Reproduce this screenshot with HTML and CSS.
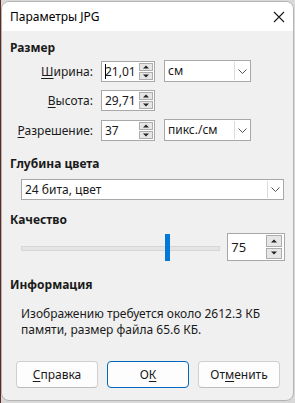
FILE: index.html
```html
<!DOCTYPE html>
<html lang="ru">
<head>
  <meta charset="UTF-8">
  <title>Параметры JPG</title>
  <link rel="stylesheet" href="styles.css">
</head>
<body>
  <div class="window">
    <div class="titlebar">
      <span class="title">Параметры JPG</span>
      <svg class="close" width="12" height="12" viewBox="0 0 12 12">
        <path d="M1 1 L11 11 M11 1 L1 11" stroke="#1a1a1a" stroke-width="1.1" fill="none"/>
      </svg>
    </div>

    <div class="content">
      <h3 class="group-title">Размер</h3>
      <div class="size-grid">
        <label class="lbl"><u>Ш</u>ирина:</label>
        <div class="spin">
          <span class="spin-value"><span class="caret"></span>21,01</span>
          <span class="spin-btns"><span class="up"></span><span class="down"></span></span>
        </div>
        <div class="combo small">
          <span>см</span>
          <span class="arrow"><svg width="9" height="5" viewBox="0 0 9 5"><path d="M0.5 0.5 L4.5 4.5 L8.5 0.5" stroke="#555" fill="none"/></svg></span>
        </div>

        <label class="lbl"><u>В</u>ысота:</label>
        <div class="spin">
          <span class="spin-value">29,71</span>
          <span class="spin-btns"><span class="up"></span><span class="down"></span></span>
        </div>
        <div></div>

        <label class="lbl"><u>Р</u>азрешение:</label>
        <div class="spin">
          <span class="spin-value">37</span>
          <span class="spin-btns"><span class="up"></span><span class="down"></span></span>
        </div>
        <div class="combo small">
          <span>пикс./см</span>
          <span class="arrow"><svg width="9" height="5" viewBox="0 0 9 5"><path d="M0.5 0.5 L4.5 4.5 L8.5 0.5" stroke="#555" fill="none"/></svg></span>
        </div>
      </div>

      <h3 class="group-title depth-title">Глубина цвета</h3>
      <div class="combo wide">
        <span>24 бита, цвет</span>
        <span class="arrow"><svg width="9" height="5" viewBox="0 0 9 5"><path d="M0.5 0.5 L4.5 4.5 L8.5 0.5" stroke="#555" fill="none"/></svg></span>
      </div>

      <h3 class="group-title quality-title">Качество</h3>
      <div class="quality-row">
        <div class="slider">
          <div class="track"></div>
          <div class="thumb" style="left: 72.5%"></div>
        </div>
        <div class="spin quality-spin">
          <span class="spin-value">75</span>
          <span class="spin-btns"><span class="up"></span><span class="down"></span></span>
        </div>
      </div>

      <h3 class="group-title info-title">Информация</h3>
      <p class="info">Изображению требуется около 2612.3 КБ памяти, размер файла 65.6 КБ.</p>
    </div>

    <div class="buttons">
      <button class="btn"><u>С</u>правка</button>
      <button class="btn default">О<u>К</u></button>
      <button class="btn">От<u>м</u>енить</button>
    </div>
  </div>
</body>
</html>
```

FILE: styles.css
```css
html, body {
  margin: 0;
  height: 100%;
}
body {
  background: linear-gradient(to right, #5e2a24 0 1px, #d9d9d9 1px);
  font-family: "Noto Sans", "Open Sans", sans-serif;
  font-size: 12px;
  color: #1a1a1a;
  padding: 1px 1px 2px 1px;
  box-sizing: border-box;
}
.window {
  width: 293px;
  height: 400px;
  box-sizing: border-box;
  background: #f0f0f0;
  border: 1px solid #b4b4b4;
  border-radius: 8px;
  overflow: hidden;
  display: flex;
  flex-direction: column;
}
.titlebar {
  height: 29px;
  background: #fff;
  display: flex;
  align-items: center;
  justify-content: space-between;
  padding: 0 8px 0 8px;
  flex-shrink: 0;
}
.title {
  font-size: 12px;
  color: #000;
}
.close {
  margin-top: 1px;
}
.content {
  padding: 9px 8px 0 8px;
}
.group-title {
  margin: 0;
  font-size: 12px;
  font-weight: 700;
  line-height: 16px;
}
u {
  text-decoration-thickness: 1px;
  text-underline-offset: 2px;
}

/* rows of size fields */
.size-grid {
  display: grid;
  grid-template-columns: 82px 54px 87px;
  column-gap: 9px;
  row-gap: 8px;
  margin-top: 4px;
  align-items: center;
}
.lbl {
  text-align: right;
  margin-right: -1px;
}
.spin {
  display: flex;
  height: 21px;
  box-sizing: border-box;
  border: 1px solid #a8a8a8;
  background: #fff;
}
.spin-value {
  flex: 1;
  padding-left: 3px;
  line-height: 19px;
  position: relative;
}
.caret {
  position: absolute;
  left: 3px;
  top: 2px;
  width: 1px;
  height: 15px;
  background: #000;
}
.spin-btns {
  width: 14px;
  display: flex;
  flex-direction: column;
  gap: 1px;
  padding: 1px 1px 1px 0;
  background: #fff;
}
.spin-btns span {
  flex: 1;
  background: #e6e6e6;
  border: 1px solid #adadad;
  position: relative;
}
.spin-btns span::after {
  content: "";
  position: absolute;
  left: 50%;
  top: 50%;
  transform: translate(-50%, -50%);
  border-left: 3px solid transparent;
  border-right: 3px solid transparent;
}
.spin-btns .up::after {
  border-bottom: 3px solid #222;
}
.spin-btns .down::after {
  border-top: 3px solid #222;
}
.combo {
  display: flex;
  justify-content: space-between;
  height: 22px;
  box-sizing: border-box;
  border: 1px solid #a8a8a8;
  background: #fff;
}
.combo > span:first-child {
  padding-left: 3px;
  line-height: 20px;
}
.combo .arrow {
  width: 14px;
  border-left: 1px solid #dcdcdc;
  display: flex;
  align-items: center;
  justify-content: center;
  margin: 1px;
}
.depth-title {
  margin-top: 15px;
}
.combo.wide {
  height: 21px;
  margin: 7px 1px 0 11px;
}
.combo.wide > span:first-child {
  line-height: 19px;
}

/* quality */
.quality-title {
  margin-top: 12px;
}
.quality-row {
  display: flex;
  align-items: center;
  margin: 5px 0 0 11px;
  gap: 7px;
}
.slider {
  position: relative;
  width: 200px;
  height: 27px;
}
.track {
  position: absolute;
  left: 0;
  right: 0;
  top: 12px;
  height: 3px;
  background: #e4e4e4;
  border: 1px solid #d6d6d6;
}
.thumb {
  position: absolute;
  top: 0;
  width: 5px;
  height: 27px;
  background: #0078d7;
}
.quality-spin {
  width: 58px;
  height: 28px;
}
.quality-spin .spin-value {
  line-height: 26px;
  font-size: 13px;
}
.quality-spin .spin-btns {
  width: 16px;
  padding: 1px 2px 1px 0;
}

/* info */
.info-title {
  margin-top: 16px;
}
.info {
  margin: 13px 0 0 11px;
  line-height: 16px;
  width: 250px;
}

/* dialog buttons */
.buttons {
  margin-top: auto;
  display: flex;
  gap: 9px;
  padding: 0 0 12px 14px;
}
.btn {
  width: 82px;
  height: 27px;
  font-family: inherit;
  font-size: 12px;
  color: #1a1a1a;
  background: #fdfdfd;
  border: 1px solid #d0d0d0;
  border-bottom-color: #bcbcbc;
  border-radius: 4px;
  padding: 0;
}
.btn.default {
  border: 1px solid #0067c0;
}
```
